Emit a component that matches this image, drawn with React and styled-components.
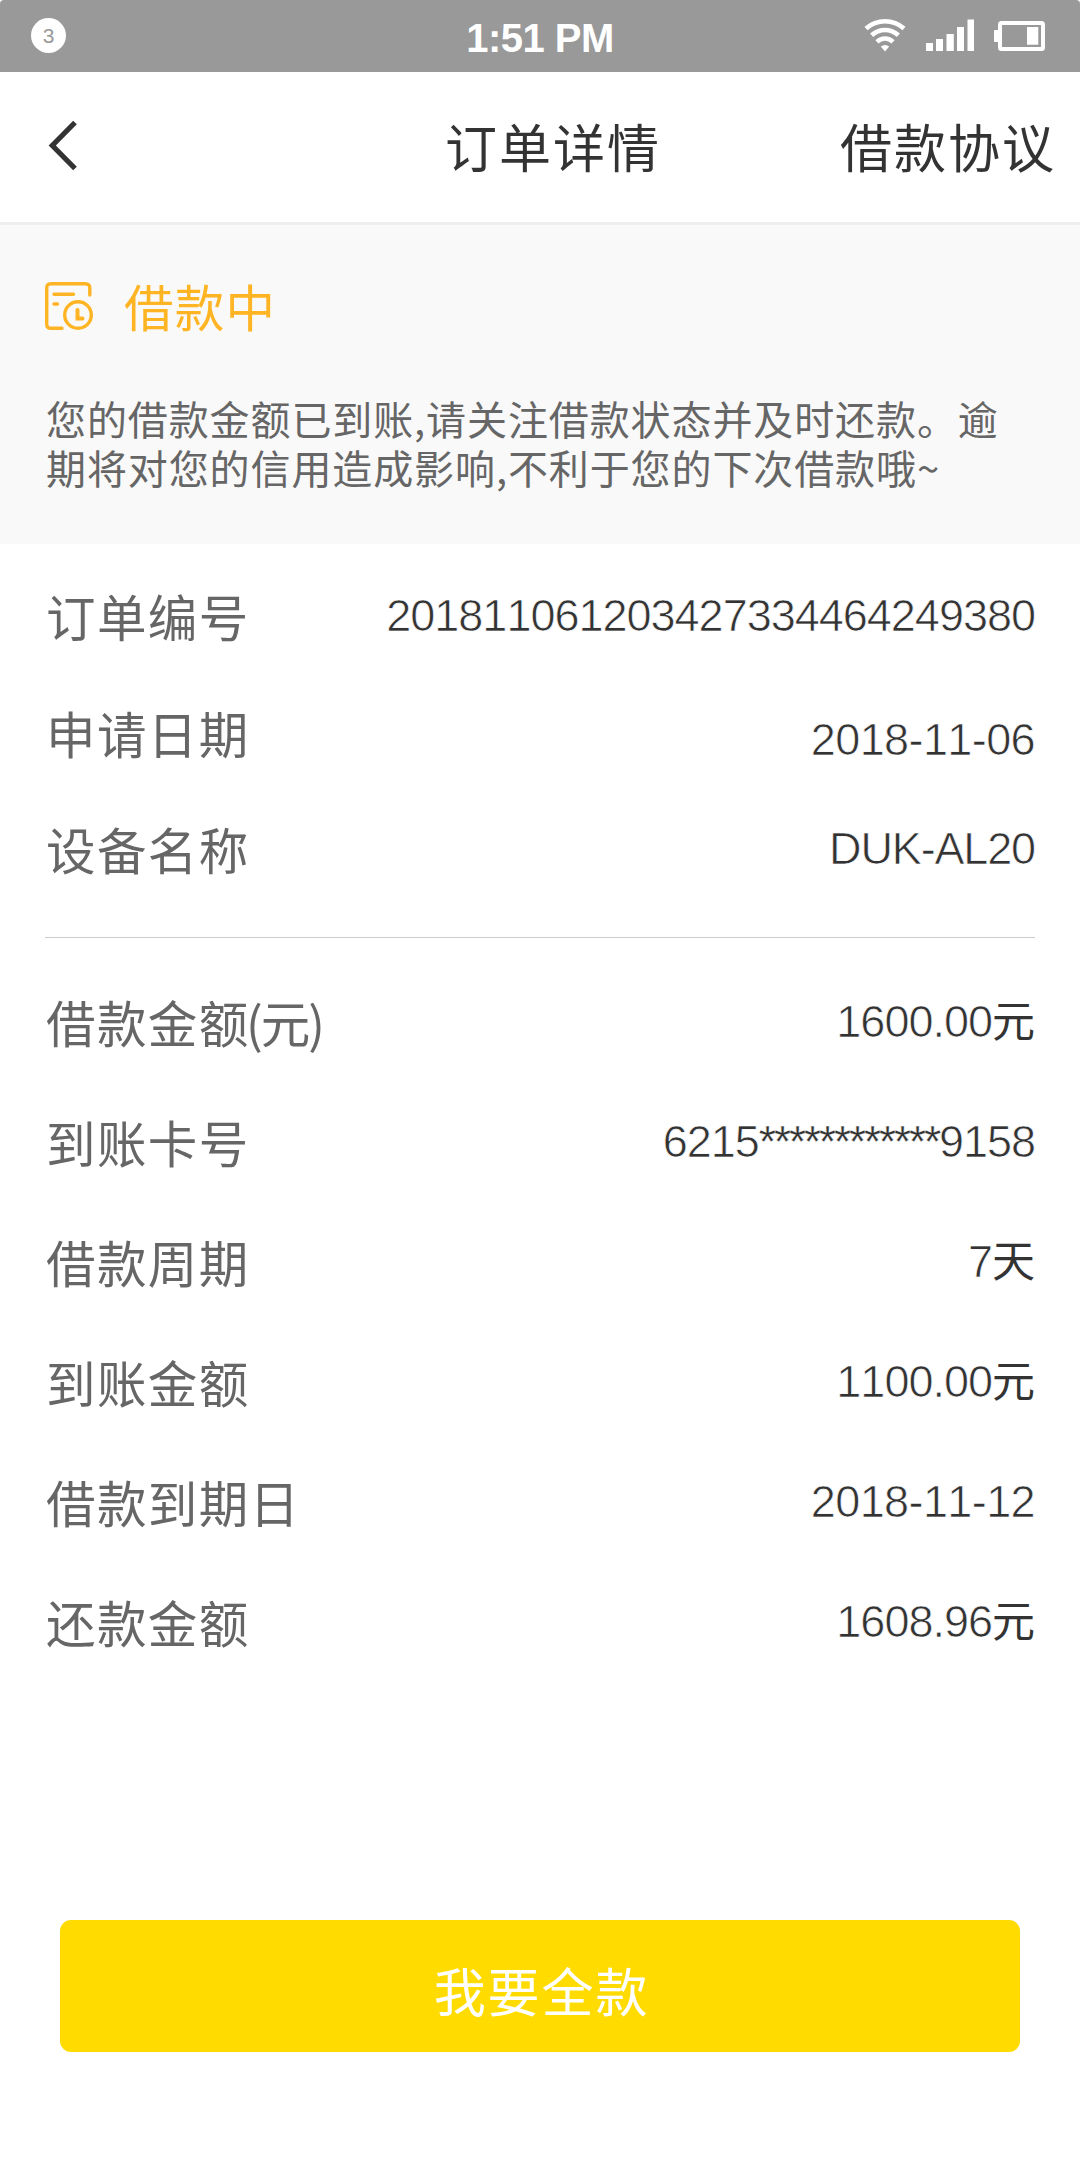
import React from 'react'
import styled, { createGlobalStyle } from 'styled-components'

const orderRows = [
  { label: '订单编号', value: '201811061203427334464249380', height: 117 },
  { label: '申请日期', value: '2018-11-06', height: 116, drop: 13, spacing: -0.6 },
  { label: '设备名称', value: 'DUK-AL20', height: 124, spacing: -1.15 },
]

const loanRows = [
  { label: '借款金额', note: '元', value: '1600.00', unit: '元' },
  { label: '到账卡号', value: '6215', mask: '************', tail: '9158' },
  { label: '借款周期', value: '7', unit: '天' },
  { label: '到账金额', value: '1100.00', unit: '元' },
  { label: '借款到期日', value: '2018-11-12', spacing: -0.6 },
  { label: '还款金额', value: '1608.96', unit: '元' },
]

function InfoRow({ label, note, value, unit, mask, tail, height = 120, drop = 6, spacing = -1 }) {
  return (
    <Row $height={height}>
      <Label>
        {label}
        {note && (
          <>
            <Paren>(</Paren>
            {note}
            <Paren>)</Paren>
          </>
        )}
      </Label>
      <Value $drop={drop} $spacing={spacing}>
        {value}
        {mask && <Mask>{mask}</Mask>}
        {tail}
        {unit && <Unit>{unit}</Unit>}
      </Value>
    </Row>
  )
}

function StatusIcons() {
  return (
    <Signals>
      <svg width="42" height="34" viewBox="0 0 42 34" fill="none" stroke="#fff" strokeWidth="4.6">
        <path d="M2 10.5C13 0.9 29 0.9 40 10.5" />
        <path d="M7.6 17.3C15.5 10.2 26.5 10.2 34.4 17.3" />
        <path d="M13 23.8C17.5 19.4 24.5 19.4 29 23.8" />
        <path d="M16.8 28.6Q21 25.6 25.2 28.6L21 33.6Z" fill="#fff" stroke="none" />
      </svg>
      <svg width="48" height="34" viewBox="0 0 48 34" fill="#fff">
        <rect x="0" y="25" width="7" height="8" />
        <rect x="10" y="21" width="7" height="12" />
        <rect x="20.5" y="16" width="7.3" height="17" />
        <rect x="31" y="9" width="7" height="24" />
        <rect x="41.5" y="1.5" width="6.5" height="31.5" />
      </svg>
      <svg width="52" height="34" viewBox="0 0 52 34" fill="#fff">
        <rect x="0" y="12" width="5" height="12" rx="1" />
        <rect x="6" y="5" width="43" height="26" rx="1.5" fill="none" stroke="#fff" strokeWidth="4" />
        <rect x="33" y="9" width="11.3" height="17.7" />
      </svg>
    </Signals>
  )
}

function App() {
  return (
    <Page>
      <GlobalStyle />
      <StatusBar>
        <Badge>3</Badge>
        <Clock>1:51 PM</Clock>
        <StatusIcons />
      </StatusBar>
      <Header>
        <BackButton>
          <svg width="32" height="52" viewBox="0 0 32 52" fill="none" stroke="#333" strokeWidth="5.2">
            <path d="M30 3.5L7.3 26.5L30 49.5" />
          </svg>
        </BackButton>
        <Title>订单详情</Title>
        <Agreement>借款协议</Agreement>
      </Header>
      <Notice>
        <NoticeHead>
          <svg width="48" height="48" viewBox="0 0 48 48" fill="none" stroke="#ffb424" strokeWidth="3.4" strokeLinecap="round">
            <path d="M44.8 13V6Q44.8 1.7 40 1.7H6Q1.7 1.7 1.7 6V42Q1.7 46.3 6 46.3H17" />
            <path d="M9 12.3H28.5M9 22H12.5" />
            <circle cx="33" cy="33" r="13.3" />
            <path d="M32.5 28V36.5H37.5" strokeWidth="4" />
          </svg>
          <span>借款中</span>
        </NoticeHead>
        <NoticeText>
          您的借款金额已到账,请关注借款状态并及时还款。逾
          <br />
          期将对您的信用造成影响,不利于您的下次借款哦~
        </NoticeText>
      </Notice>
      <Details>
        <Group $top={36}>
          {orderRows.map((row) => (
            <InfoRow key={row.label} {...row} />
          ))}
        </Group>
        <Divider />
        <Group $top={48}>
          {loanRows.map((row) => (
            <InfoRow key={row.label} {...row} />
          ))}
        </Group>
      </Details>
      <PayButton>我要全款</PayButton>
    </Page>
  )
}

export default App

const GlobalStyle = createGlobalStyle`
  * {
    box-sizing: border-box;
  }
  body {
    margin: 0;
    background: #fff;
    font-family: "Liberation Sans", "Noto Sans CJK SC", sans-serif;
  }
  svg {
    display: block;
    flex: none;
  }
`

const Page = styled.div`
  width: 1080px;
  height: 2160px;
  display: flex;
  flex-direction: column;
  overflow: hidden;
  border-radius: 4px;
  background: #fff;
`

const StatusBar = styled.div`
  height: 72px;
  flex: none;
  display: grid;
  grid-template-columns: 1fr auto 1fr;
  align-items: center;
  padding: 0 34px 2px 31px;
  background: #999;
`

const Badge = styled.div`
  width: 35px;
  height: 35px;
  margin-top: 1px;
  border-radius: 50%;
  background: #fff;
  color: #999;
  font-size: 21px;
  line-height: 36px;
  text-align: center;
`

const Clock = styled.div`
  padding: 5px 0 0 3px;
  color: #fff;
  font-size: 40px;
  font-weight: 700;
  line-height: 60px;
  letter-spacing: -0.5px;
`

const Signals = styled.div`
  display: flex;
  justify-content: flex-end;
  gap: 20px;
`

const Header = styled.header`
  height: 153px;
  flex: none;
  display: flex;
  align-items: center;
  padding: 0 24px 4px 45px;
  border-bottom: 3px solid #eee;
  color: #333;
  font-family: "Noto Sans CJK SC", sans-serif;
  font-size: 52px;
  letter-spacing: 2px;
`

const BackButton = styled.button`
  display: flex;
  padding: 0;
  border: 0;
  background: none;
`

const Title = styled.div`
  margin-left: 368px;
`

const Agreement = styled.div`
  margin-left: auto;
`

const Notice = styled.section`
  height: 319px;
  flex: none;
  padding: 45px 45px 0;
  background: #f9f9f9;
`

const NoticeHead = styled.div`
  display: flex;
  align-items: center;
  gap: 31px;
  height: 72px;
  color: #ffb424;
  font-family: "Noto Sans CJK SC", sans-serif;
  font-size: 49.5px;
  letter-spacing: 1.3px;

  span {
    padding-bottom: 2px;
  }
`

const NoticeText = styled.p`
  margin: 52px 0 0 1px;
  color: #666;
  font-family: "Noto Sans CJK SC", sans-serif;
  font-size: 40px;
  line-height: 48.5px;
  letter-spacing: 0.9px;
  white-space: nowrap;
`

const Details = styled.section`
  height: 1376px;
  flex: none;
  padding: 0 45px;
`

const Group = styled.div`
  padding-top: ${(p) => p.$top}px;
`

const Row = styled.div`
  height: ${(p) => p.$height}px;
  display: flex;
  justify-content: space-between;
  align-items: flex-start;
`

const Label = styled.span`
  padding-left: 1px;
  color: #666;
  font-family: "Noto Sans CJK SC", sans-serif;
  font-size: 49.5px;
  line-height: 72px;
  letter-spacing: 1.4px;
`

const Paren = styled.span`
  margin-left: -3.5px;
  letter-spacing: -2px;
`

const Value = styled.span`
  margin-top: ${(p) => p.$drop}px;
  color: #333;
  font-size: 45px;
  font-kerning: none;
  line-height: 60px;
  letter-spacing: ${(p) => p.$spacing}px;
  -webkit-text-stroke: 0.7px #fff;
`

const Mask = styled.span`
  letter-spacing: -2.5px;
  -webkit-text-stroke: 0.3px #fff;
`

const Unit = styled.span`
  font-size: 43px;
  letter-spacing: 0;
  -webkit-text-stroke: 0;
`

const Divider = styled.div`
  height: 1px;
  background: #ccc;
`

const PayButton = styled.button`
  width: 960px;
  height: 132px;
  flex: none;
  margin: 0 auto;
  padding: 6px 0 0 3px;
  border: 0;
  border-radius: 11px;
  background: #ffdb00;
  color: #fff;
  font-family: "Noto Sans CJK SC", sans-serif;
  font-size: 52px;
  letter-spacing: 1.9px;
`
